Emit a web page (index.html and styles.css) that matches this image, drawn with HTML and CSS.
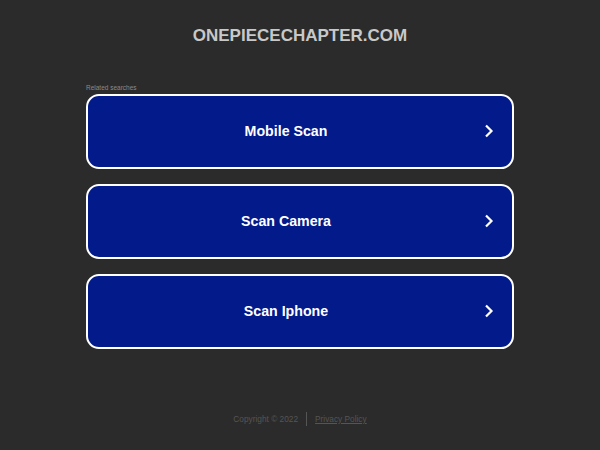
FILE: index.html
```html
<!DOCTYPE html>
<html>
<head>
<meta charset="utf-8">
<link rel="stylesheet" href="styles.css">
</head>
<body>
<div class="page">
  <header class="title">ONEPIECECHAPTER.COM</header>
  <main class="main">
    <div class="related">Related searches</div>
    <div class="list">
      <a class="item" href="#"><span class="label">Mobile Scan</span><svg class="chev" width="10" height="14" viewBox="0 0 10 14"><path d="M2 1.5 L7.5 7 L2 12.5" fill="none" stroke="#fff" stroke-width="2.2"/></svg></a>
      <a class="item" href="#"><span class="label">Scan Camera</span><svg class="chev" width="10" height="14" viewBox="0 0 10 14"><path d="M2 1.5 L7.5 7 L2 12.5" fill="none" stroke="#fff" stroke-width="2.2"/></svg></a>
      <a class="item" href="#"><span class="label">Scan Iphone</span><svg class="chev" width="10" height="14" viewBox="0 0 10 14"><path d="M2 1.5 L7.5 7 L2 12.5" fill="none" stroke="#fff" stroke-width="2.2"/></svg></a>
    </div>
  </main>
  <footer class="footer">
    <span class="copy">Copyright © 2022</span>
    <span class="sep"></span>
    <a class="privacy" href="#">Privacy Policy</a>
  </footer>
</div>
</body>
</html>
```
FILE: styles.css
```css
html, body {
  margin: 0;
  padding: 0;
  background: #2b2b2b;
  font-family: "Liberation Sans", Arial, sans-serif;
}
.page {
  width: 600px;
  height: 450px;
  display: flex;
  flex-direction: column;
  align-items: center;
}
.title {
  margin-top: 26px;
  height: 20px;
  line-height: 20px;
  font-size: 17px;
  font-weight: bold;
  color: #c8c8c8;
}
.main {
  width: 428px;
  margin-top: 37px;
}
.related {
  font-size: 6.5px;
  color: #8a8a8a;
  height: 8px;
  line-height: 8px;
  margin-top: 1px;
  margin-bottom: 2px;
}
.list {
  display: flex;
  flex-direction: column;
  gap: 15px;
}
.item {
  box-sizing: border-box;
  height: 75px;
  border: 2px solid #fff;
  border-radius: 13px;
  background: #021a8a;
  display: flex;
  align-items: center;
  text-decoration: none;
  position: relative;
}
.label {
  flex: 1;
  text-align: center;
  font-size: 14.2px;
  font-weight: bold;
  color: #fff;
  margin-right: 28px;
  padding-bottom: 2px;
}
.chev {
  position: absolute;
  right: 18px;
  top: 28px;
}
.footer {
  margin-top: 63px;
  display: flex;
  align-items: center;
  font-size: 8.3px;
  color: #555;
}
.sep {
  width: 1px;
  height: 14px;
  background: #555;
  margin: 0 8px;
}
.privacy {
  color: #555;
  text-decoration: underline;
}
```
